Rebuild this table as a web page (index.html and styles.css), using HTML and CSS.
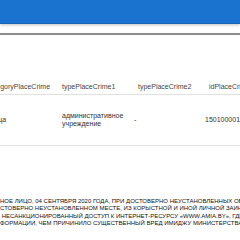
FILE: index.html
```html
<!DOCTYPE html>
<html lang="ru">
<head>
<meta charset="utf-8">
<link rel="stylesheet" href="styles.css">
</head>
<body>
<header class="appbar"></header>
<nav class="tabs"></nav>
<main class="scroller">
  <div class="grid">
    <div class="cell head c1">categoryPlaceCrime</div>
    <div class="cell head c2">typePlaceCrime1</div>
    <div class="cell head c3">typePlaceCrime2</div>
    <div class="cell head c4">idPlaceCrime</div>
    <div class="cell body c1">улица</div>
    <div class="cell body c2">административное<br>учреждение</div>
    <div class="cell body c3">-</div>
    <div class="cell body c4">150100001000</div>
  </div>
</main>
<section class="story">
  <div class="line">НОЕ ЛИЦО, 04 СЕНТЯБРЯ 2020 ГОДА, ПРИ ДОСТОВЕРНО НЕУСТАНОВЛЕННЫХ ОБСТОЯТЕЛЬСТВАХ</div>
  <div class="line">СТОВЕРНО НЕУСТАНОВЛЕННОМ МЕСТЕ, ИЗ КОРЫСТНОЙ И ИНОЙ ЛИЧНОЙ ЗАИНТЕРЕСОВАННОСТИ</div>
  <div class="line">&nbsp;НЕСАНКЦИОНИРОВАННЫЙ ДОСТУП К ИНТЕРНЕТ-РЕСУРСУ «WWW.AMIA.BY», ГДЕ РАЗМЕСТИЛО</div>
  <div class="line">ФОРМАЦИИ, ЧЕМ ПРИЧИНИЛО СУЩЕСТВЕННЫЙ ВРЕД ИМИДЖУ МИНИСТЕРСТВА ВНУТРЕННИХ ДЕЛ</div>
</section>
</body>
</html>
```

FILE: styles.css
```css
html, body {
  margin: 0;
  padding: 0;
  background: #fff;
  width: 240px;
  height: 240px;
  overflow: hidden;
  font-family: "Liberation Sans", Arial, sans-serif;
}
.appbar {
  height: 23px;
  background: #1a73cf;
  border-bottom: 1px solid #1766bd;
  box-shadow: 0 1px 3px rgba(0, 0, 0, 0.25);
  position: relative;
  z-index: 1;
}
.tabs {
  height: 9px;
  background: #fff;
  border-bottom: 2px solid #8c8c8c;
}
.scroller {
  overflow: hidden;
  margin-top: 43px;
}
.grid {
  display: grid;
  grid-template-columns: 75px 72px 71px 80px;
  margin-left: -13px;
  width: 298px;
}
.cell {
  font-size: 7px;
  white-space: nowrap;
  display: flex;
  align-items: center;
  border-bottom: 1px solid #e0e0e0;
}
.head {
  height: 16px;
  color: #444;
}
.body {
  height: 50px;
  color: #333;
  line-height: 8px;
}
.head.c3, .head.c4 { padding-left: 4px; }
.story {
  margin-top: 52px;
  font-size: 6px;
  line-height: 7.3px;
  color: #111;
}
.line {
  white-space: nowrap;
  overflow: hidden;
}
```
